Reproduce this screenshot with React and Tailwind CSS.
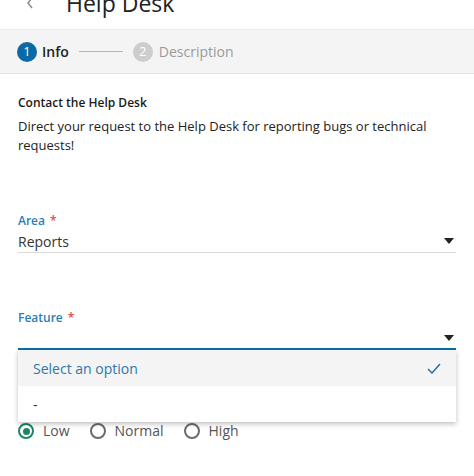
import React, { useState } from 'react';

const font = { fontFamily: '"Open Sans", "Noto Sans", sans-serif' };

function Caret() {
    return (
        <svg width="10" height="6" viewBox="0 0 10 6" className="shrink-0">
            <path d="M0 0 H10 L5 6 Z" fill="#222" />
        </svg>
    );
}

function Radio({ label, checked }) {
    return (
        <label className="flex items-center gap-[9px] mr-[20px]">
            <span className={`w-[16px] h-[16px] rounded-full border-2 flex items-center justify-center ${checked ? 'border-[#1d8565]' : 'border-[#6b6b6b]'}`}>
                {checked && <span className="w-[7px] h-[7px] rounded-full bg-[#1d8565]" />}
            </span>
            <span className="text-[14px] leading-5 text-[#555]">{label}</span>
        </label>
    );
}

export default function App() {
    const [priority] = useState('Low');

    return (
        <div className="w-[474px] h-[476px] bg-white overflow-hidden" style={font}>
            {/* header, mostly scrolled out of view */}
            <div className="h-[29px] overflow-hidden flex items-start">
                <div className="flex items-start -mt-[13px]">
                    <svg width="8" height="12" viewBox="0 0 8 12" className="ml-[26px] mt-[10px]">
                        <path d="M6 1 L2 6 L6 11" fill="none" stroke="#8a8a8a" strokeWidth="1.5" />
                    </svg>
                    <h1 className="ml-[32px] text-[23px] leading-8 text-[#222]">Help Desk</h1>
                </div>
            </div>

            {/* stepper */}
            <div className="h-[45px] bg-[#f4f4f4] border-t border-[#ebebeb] border-b border-b-[#e2e2e2] flex items-center px-[17px]">
                <span className="w-[20px] h-[20px] rounded-full bg-[#0b6aa3] text-white text-[13px] flex items-center justify-center">1</span>
                <span className="ml-[5px] text-[14px] font-semibold text-[#222]">Info</span>
                <span className="ml-[10px] w-[44px] h-px bg-[#b5b5b5]" />
                <span className="ml-[10px] w-[20px] h-[20px] rounded-full bg-[#cdcdcd] text-white text-[13px] flex items-center justify-center">2</span>
                <span className="ml-[6px] text-[14px] text-[#9a9a9a]">Description</span>
            </div>

            <div className="px-[18px]">
                <h2 className="mt-[19px] text-[12px] leading-5 font-semibold text-[#1a1a1a]">Contact the Help Desk</h2>
                <p className="mt-[4px] text-[13px] leading-[19px] text-[#222]">
                    Direct your request to the Help Desk for reporting bugs or technical requests!
                </p>

                {/* Area */}
                <div className="mt-[57px]">
                    <div className="text-[12px] leading-[18px] font-semibold text-[#2b7db5]">
                        Area <span className="text-[#e04848] ml-[2px]">*</span>
                    </div>
                    <div className="flex items-center justify-between h-[23px] border-b border-[#d9d9d9] pr-[2px]">
                        <span className="text-[14px] text-[#333]">Reports</span>
                        <Caret />
                    </div>
                </div>

                {/* Feature */}
                <div className="mt-[56px] relative">
                    <div className="text-[12px] leading-[18px] font-semibold text-[#2b7db5]">
                        Feature <span className="text-[#e04848] ml-[2px]">*</span>
                    </div>
                    <div className="flex items-center justify-end h-[23px] border-b-2 border-[#0b6fa4] pr-[2px]">
                        <Caret />
                    </div>
                    <div className="absolute left-0 right-0 top-full z-10 bg-white shadow-[0_2px_5px_rgba(0,0,0,0.25)]">
                        <div className="h-[36px] bg-[#f4f4f4] flex items-center justify-between pl-[15px] pr-[15px]">
                            <span className="text-[14px] text-[#2b78ae]">Select an option</span>
                            <svg width="14" height="11" viewBox="0 0 14 11">
                                <path d="M1 6 L5 10 L13 1" fill="none" stroke="#2b6ea6" strokeWidth="1.5" />
                            </svg>
                        </div>
                        <div className="h-[36px] flex items-center pl-[15px] text-[14px] text-[#333]">-</div>
                    </div>
                </div>

                {/* Priority (label hidden under the open menu) */}
                <div className="mt-[71px] flex items-center">
                    <Radio label="Low" checked={priority === 'Low'} />
                    <Radio label="Normal" checked={priority === 'Normal'} />
                    <Radio label="High" checked={priority === 'High'} />
                </div>
            </div>
        </div>
    );
}
